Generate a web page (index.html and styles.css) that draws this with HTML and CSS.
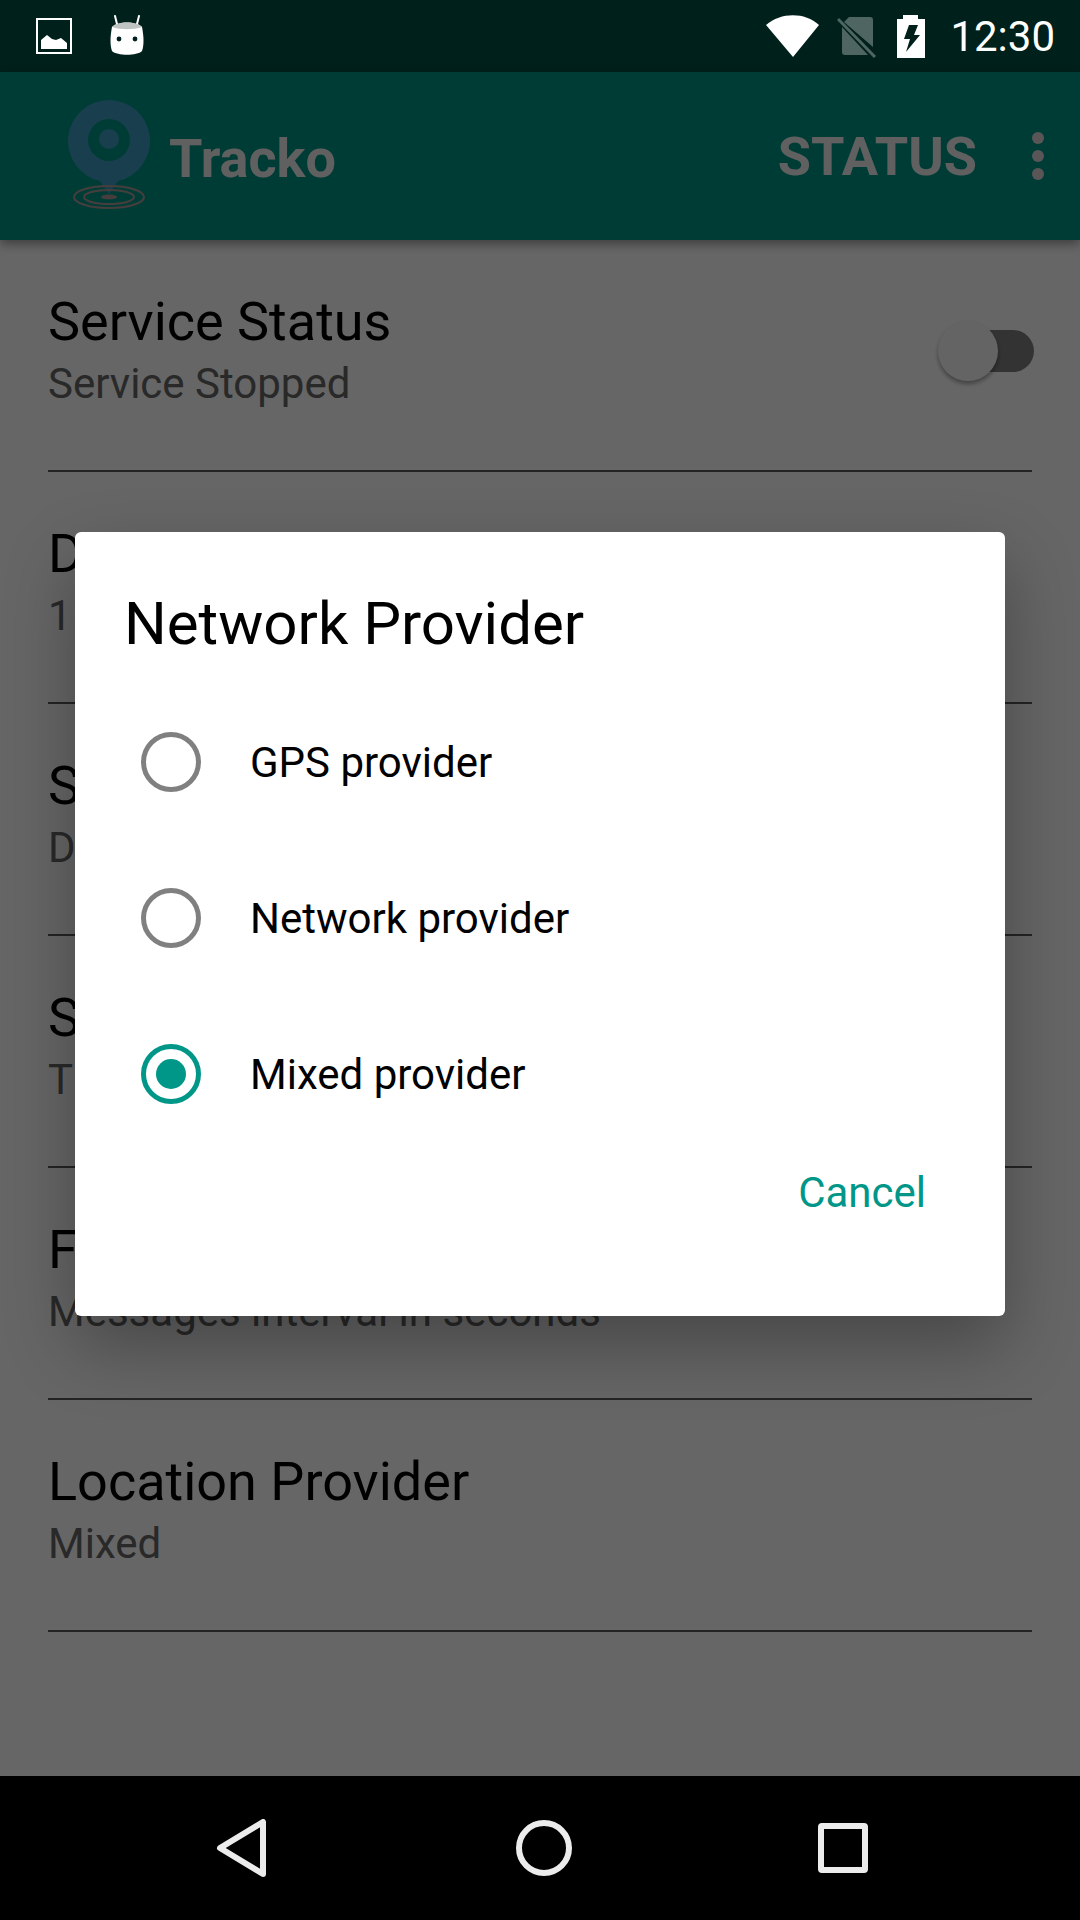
FILE: index.html
```html
<!DOCTYPE html>
<html lang="en">
<head>
    <meta charset="UTF-8">
    <meta name="viewport" content="width=device-width, initial-scale=1.0">
    <title>Tracko</title>
    <link rel="stylesheet" href="styles.css">
</head>
<body>
    <div class="phone">
        <div class="status-bar">
            <div class="status-left">
                <svg class="icon-picture" width="36" height="36" viewBox="0 0 36 36">
                    <rect x="1" y="1" width="34" height="34" fill="none" stroke="#fff" stroke-width="2"/>
                    <path d="M5 31V22L11 17L16 21L20 22L25 20L31 25V31Z" fill="#fff"/>
                </svg>
                <svg class="icon-robot" width="38" height="42" viewBox="0 0 38 42">
                    <path d="M7 1L9 9M31 1L29 9" stroke="#fff" stroke-width="2" stroke-linecap="round"/>
                    <path d="M4 12C9 6 29 6 34 12C36 22 36 30 34 36C29 41 9 41 4 36C2 30 2 22 4 12Z" fill="#fff"/>
                    <path d="M4 12C9 6 29 6 34 12C25 15 13 15 4 12Z" fill="#bfc4c3"/>
                    <circle cx="11" cy="24" r="2.4" fill="#00201b"/>
                    <circle cx="27" cy="24" r="2.4" fill="#00201b"/>
                </svg>
            </div>
            <div class="status-right">
                <svg width="54" height="44" viewBox="0 0 54 44">
                    <path d="M0 11C15 -2 39 -2 53 11L27 43Z" fill="#fff"/>
                </svg>
                <svg class="icon-sim" width="42" height="44" viewBox="0 0 42 44">
                    <path d="M7 8L12 3H33A3 3 0 0 1 36 6V33ZM5 13L31 41H8A3 3 0 0 1 5 38Z" fill="#4f6561"/>
                    <path d="M1 5L38 43" stroke="#4f6561" stroke-width="3"/>
                </svg>
                <svg class="icon-battery" width="30" height="44" viewBox="0 0 30 44">
                    <path d="M7 5V1H22V5H29V44H1V5Z" fill="#fff"/>
                    <path d="M13 11H22L18 21H24L10 38L14 25H8Z" fill="#00201b"/>
                </svg>
                <span class="clock">12:30</span>
            </div>
        </div>

        <div class="app-bar">
            <svg class="logo" width="82" height="112" viewBox="0 0 82 112">
                <path d="M41 0A41 41 0 0 1 50 81L41 94L32 81A41 41 0 0 1 41 0Z" fill="#3f9fc4"/>
                <circle cx="41" cy="40" r="21" fill="#009688"/>
                <circle cx="41" cy="39" r="10" fill="#3f9fc4"/>
                <ellipse cx="41" cy="97" rx="35" ry="11" fill="none" stroke="#b09a9a" stroke-width="2"/>
                <ellipse cx="41" cy="97" rx="25" ry="7" fill="none" stroke="#b09a9a" stroke-width="2"/>
                <ellipse cx="41" cy="97" rx="8" ry="2.5" fill="#b09a9a"/>
            </svg>
            <span class="app-title">Tracko</span>
            <span class="app-action">STATUS</span>
            <div class="overflow">
                <span class="dot"></span>
                <span class="dot"></span>
                <span class="dot"></span>
            </div>
        </div>

        <div class="settings">
            <div class="row">
                <div>
                    <div class="row-title">Service Status</div>
                    <div class="row-summary">Service Stopped</div>
                </div>
                <div class="switch">
                    <span class="switch-track"></span>
                    <span class="switch-thumb"></span>
                </div>
            </div>
            <div class="row">
                <div>
                    <div class="row-title">D</div>
                    <div class="row-summary">1</div>
                </div>
            </div>
            <div class="row">
                <div>
                    <div class="row-title">S</div>
                    <div class="row-summary">D</div>
                </div>
            </div>
            <div class="row">
                <div>
                    <div class="row-title">S</div>
                    <div class="row-summary">T</div>
                </div>
            </div>
            <div class="row">
                <div>
                    <div class="row-title">F</div>
                    <div class="row-summary">Messages interval in seconds</div>
                </div>
            </div>
            <div class="row">
                <div>
                    <div class="row-title">Location Provider</div>
                    <div class="row-summary">Mixed</div>
                </div>
            </div>
        </div>

        <div class="nav-bar">
            <svg width="56" height="58" viewBox="0 0 56 58">
                <path d="M47 3V55L4 29Z" transform="translate(2 0)" fill="none" stroke="#ececec" stroke-width="6" stroke-linejoin="round"/>
            </svg>
            <svg width="56" height="56" viewBox="0 0 56 56">
                <circle cx="28" cy="28" r="25" fill="none" stroke="#ececec" stroke-width="6"/>
            </svg>
            <svg width="50" height="50" viewBox="0 0 50 50">
                <rect x="3" y="3" width="44" height="44" rx="1" fill="none" stroke="#ececec" stroke-width="6"/>
            </svg>
        </div>

        <!-- Voile sombre et dialogue -->
        <div class="scrim">
            <div class="dialog">
                <div class="dialog-title">Network Provider</div>
                <div class="options">
                    <div class="option">
                        <span class="radio"></span>
                        <span class="option-label">GPS provider</span>
                    </div>
                    <div class="option">
                        <span class="radio"></span>
                        <span class="option-label">Network provider</span>
                    </div>
                    <div class="option">
                        <span class="radio radio-on"></span>
                        <span class="option-label">Mixed provider</span>
                    </div>
                </div>
                <div class="dialog-actions">
                    <span class="cancel">Cancel</span>
                </div>
            </div>
        </div>
    </div>
</body>
</html>
```
FILE: styles.css
```css
html, body {
    margin: 0;
    padding: 0;
}

body {
    font-family: Roboto, "Liberation Sans", sans-serif;
}

.phone {
    position: relative;
    display: flex;
    flex-direction: column;
    width: 1080px;
    height: 1920px;
    overflow: hidden;
    background-color: #fff;
}

/* Barre d'etat */
.status-bar {
    display: flex;
    justify-content: space-between;
    align-items: center;
    height: 72px;
    flex-shrink: 0;
    padding: 0 25px 0 36px;
    background-color: #00201b;
    box-sizing: border-box;
}

.status-left {
    display: flex;
    align-items: center;
    gap: 36px;
}

.status-right {
    display: flex;
    align-items: center;
    gap: 17px;
}

.clock {
    margin-left: 7px;
    font-size: 42px;
    color: #fff;
}

/* Barre d'application */
.app-bar {
    display: flex;
    align-items: center;
    height: 168px;
    flex-shrink: 0;
    padding: 0 36px 0 68px;
    background-color: #009688;
    box-sizing: border-box;
    color: #fff;
    box-shadow: 0 4px 10px rgba(0, 0, 0, 0.4);
    position: relative;
}

.app-title {
    margin-left: 19px;
    margin-top: 4px;
    font-size: 54px;
    font-weight: 700;
    color: #f0f0f0;
}

.app-action {
    margin-left: auto;
    font-size: 54px;
    font-weight: 700;
    color: #f0f0f0;
}

.overflow {
    display: flex;
    flex-direction: column;
    gap: 6px;
    margin-left: 55px;
}

.dot {
    width: 12px;
    height: 12px;
    border-radius: 50%;
    background-color: #e0d8dc;
}

/* Liste des reglages */
.settings {
    flex: 1;
    background-color: #fff;
    padding: 0 48px;
}

.row {
    display: flex;
    justify-content: space-between;
    align-items: center;
    height: 232px;
    box-sizing: border-box;
    border-bottom: 2px solid #5a5a5a;
    padding-bottom: 8px;
}

.row-title {
    font-size: 54px;
    line-height: 64px;
    color: #000;
}

.row-summary {
    margin-top: 2px;
    font-size: 42px;
    line-height: 56px;
    color: #666;
}

.switch {
    position: relative;
    width: 96px;
    height: 60px;
    margin-right: -2px;
}

.switch-track {
    position: absolute;
    top: 9px;
    right: 0;
    width: 80px;
    height: 42px;
    border-radius: 21px;
    background-color: #808080;
}

.switch-thumb {
    position: absolute;
    top: 0;
    left: 0;
    width: 60px;
    height: 60px;
    border-radius: 50%;
    background-color: #fafafa;
    box-shadow: 0 3px 4px rgba(0, 0, 0, 0.35);
}

/* Barre de navigation */
.nav-bar {
    display: flex;
    justify-content: space-between;
    align-items: center;
    height: 144px;
    flex-shrink: 0;
    padding: 0 212px 0 214px;
    background-color: #000;
    box-sizing: border-box;
}

/* Dialogue */
.scrim {
    position: absolute;
    top: 72px;
    left: 0;
    right: 0;
    bottom: 144px;
    display: flex;
    justify-content: center;
    align-items: center;
    background-color: rgba(0, 0, 0, 0.6);
}

.dialog {
    width: 930px;
    height: 784px;
    box-sizing: border-box;
    padding: 50px 0 0;
    background-color: #fff;
    border-radius: 6px;
    box-shadow: 0 30px 70px rgba(0, 0, 0, 0.3);
    display: flex;
    flex-direction: column;
}

.dialog-title {
    padding-left: 49px;
    font-size: 60px;
    line-height: 84px;
    color: #000;
}

.options {
    margin-top: 18px;
}

.option {
    display: flex;
    align-items: center;
    height: 156px;
    padding-left: 66px;
}

.radio {
    width: 60px;
    height: 60px;
    box-sizing: border-box;
    border: 5px solid #808080;
    border-radius: 50%;
    display: flex;
    justify-content: center;
    align-items: center;
}

.radio-on {
    border-color: #009688;
}

.radio-on::after {
    content: "";
    width: 30px;
    height: 30px;
    border-radius: 50%;
    background-color: #009688;
}

.option-label {
    margin-left: 49px;
    font-size: 42px;
    color: #000;
}

.dialog-actions {
    display: flex;
    justify-content: flex-end;
    padding: 16px 79px 0 0;
}

.cancel {
    font-size: 42px;
    color: #009688;
}
```
